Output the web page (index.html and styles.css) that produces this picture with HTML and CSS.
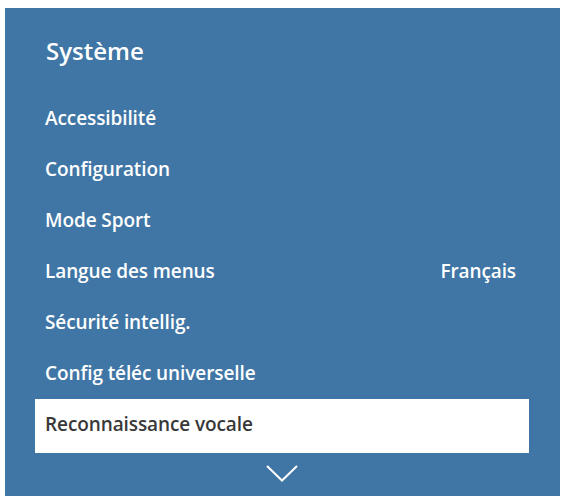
FILE: index.html
```html
<!DOCTYPE html>
<html lang="fr">

<head>
  <meta charset="UTF-8">
  <meta name="viewport" content="width=device-width, initial-scale=1.0">
  <title>Système</title>
  <link rel="stylesheet" href="styles.css">
</head>

<body>
  <div class="panel">
    <h1 class="panel-title">Système</h1>

    <ul class="menu">
      <li class="menu-item">Accessibilité</li>
      <li class="menu-item">Configuration</li>
      <li class="menu-item">Mode Sport</li>
      <li class="menu-item">
        <span>Langue des menus</span>
        <span class="menu-value">Français</span>
      </li>
      <li class="menu-item">Sécurité intellig.</li>
      <li class="menu-item">Config téléc universelle</li>
      <li class="menu-item selected">Reconnaissance vocale</li>
    </ul>

    <div class="more">
      <svg width="32" height="17" viewBox="0 0 32 17">
        <polyline points="1,1 16,15.5 31,1" fill="none" stroke="#fff" stroke-width="2" />
      </svg>
    </div>
  </div>
</body>

</html>
```

FILE: styles.css
```css
body {
  background-color: #fff;
  font-family: "Open Sans", "Noto Sans", sans-serif;
  margin: 0;
  padding: 0;
}

.panel {
  margin: 8px 0 0 5px;
  width: 555px;
  height: 488px;
  background-color: #4076a5;
  padding: 0 31px 0 30px;
  box-sizing: border-box;
  color: #fff;
}

.panel-title {
  margin: 0;
  padding: 30px 0 0 11px;
  height: 55px;
  font-size: 24px;
  line-height: 26px;
  font-weight: 600;
}

.menu {
  list-style: none;
  margin: 0;
  padding: 0;
}

.menu-item {
  display: flex;
  justify-content: space-between;
  height: 51px;
  line-height: 51px;
  padding: 0 13px 0 10px;
  font-size: 19px;
  font-weight: 600;
  letter-spacing: -0.1px;
}

.menu-item.selected {
  height: 54px;
  background-color: #fff;
  color: #383838;
  line-height: 50px;
}

.more {
  display: flex;
  justify-content: center;
  padding-top: 12px;
}
```
